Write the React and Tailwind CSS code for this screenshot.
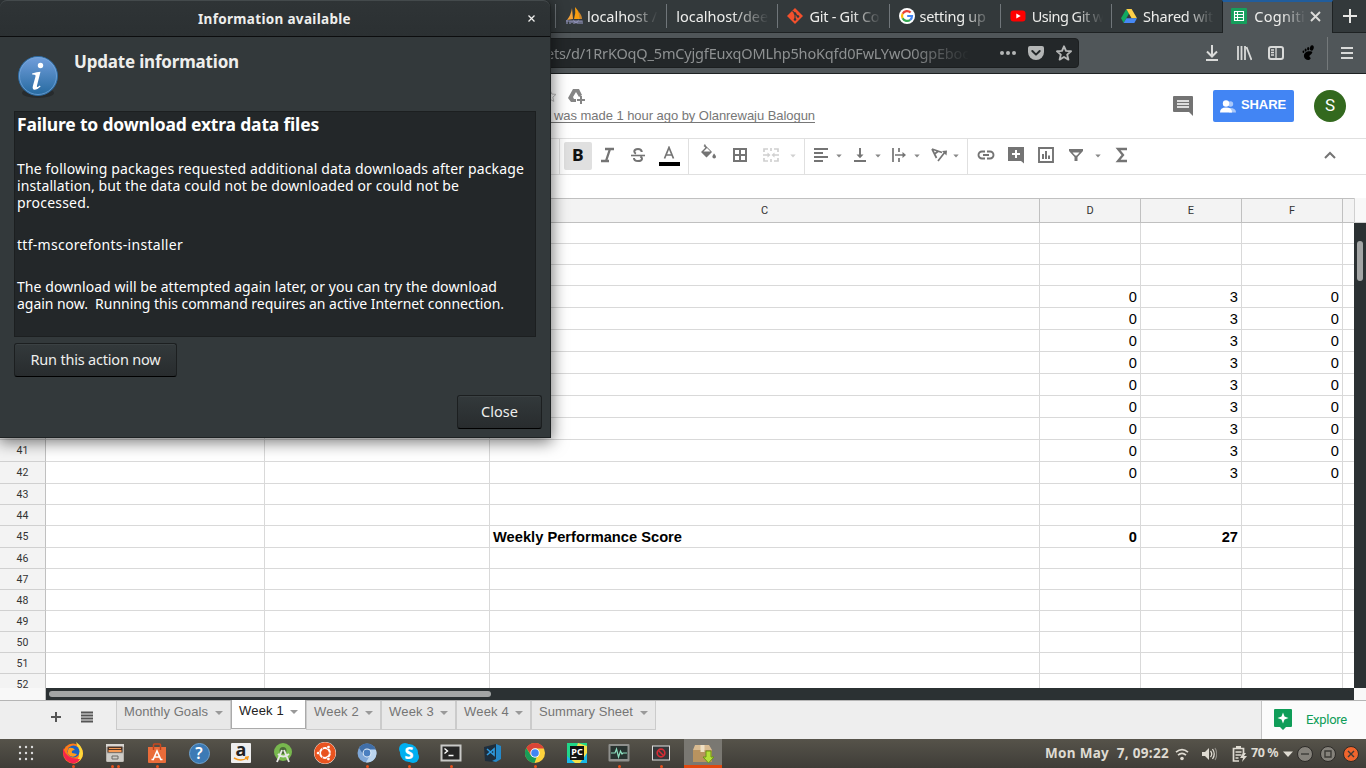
import React, { useLayoutEffect, useRef } from "react";
import { FaUbuntu } from "react-icons/fa";

const UBUNTU = "font-['Noto_Sans','Open_Sans',sans-serif]";
const ARIAL = "font-['Liberation_Sans',Arial,sans-serif]";
const ROBOTO = "font-[Roboto,sans-serif]";

/* A single line of text whose tracking is adjusted to span `w` pixels. */
function Fit({ w, className = "", children }) {
  const ref = useRef(null);
  useLayoutEffect(() => {
    const el = ref.current;
    el.style.letterSpacing = "0px";
    const natural = el.getBoundingClientRect().width;
    el.style.letterSpacing = (w - natural) / children.length + "px";
  }, [w, children]);
  return (
    <span ref={ref} className={"inline-block whitespace-pre " + className}>
      {children}
    </span>
  );
}

const Svg = ({ s = 18, vb = 18, className = "", children }) => (
  <svg width={s} height={s} viewBox={`0 0 ${vb} ${vb}`} className={"shrink-0 " + className} fill="currentColor">
    {children}
  </svg>
);

/* ---------- browser chrome ---------- */

const icons = {
  pma: (
    <Svg s={18}>
      <path d="M7 1 8 12 2 13Q6 8 7 1Z" fill="#f5a33b" />
      <path d="M10 0Q15 5 15 12L9 12Q11 6 10 0Z" fill="#f89c0e" />
      <path d="M13 4Q17 8 17 12L15 12Z" fill="#c9852f" />
      <path d="M1 14h16M2 17v-4M5 17v-3h2v2M9 17v-3l2 2 2-2v3M15 17v-3h2v3" stroke="#8d8fb5" fill="none" strokeWidth="1.2" />
    </Svg>
  ),
  git: (
    <Svg s={16} vb={16}>
      <path d="m8 0 8 8-8 8-8-8Z" fill="#f4502c" />
      <path d="m5.5 2.8 2.5 2.7v6M8 5.500l3 3" stroke="#33393b" fill="none" strokeWidth="1.1" />
      <circle cx="8" cy="5.5" r="1.3" fill="#33393b" />
      <circle cx="8" cy="11.5" r="1.3" fill="#33393b" />
      <circle cx="11" cy="8.5" r="1.3" fill="#33393b" />
    </Svg>
  ),
  google: (
    <Svg s={16} vb={16}>
      <circle cx="8" cy="8" r="8" fill="#fff" />
      <g fill="none" strokeWidth="2.2">
        <path d="M11.6 4.6A5 5 0 0 0 3.6 5.7" stroke="#ea4335" />
        <path d="M3.6 5.7A5 5 0 0 0 3.6 10.3" stroke="#fbbc05" />
        <path d="M3.6 10.3A5 5 0 0 0 11.2 11.8" stroke="#34a853" />
        <path d="M11.2 11.8A5 5 0 0 0 13 8H8.2" stroke="#4285f4" />
      </g>
    </Svg>
  ),
  youtube: (
    <Svg s={16} vb={16}>
      <rect x="0.5" y="2.5" width="15" height="11" rx="3" fill="#f00" />
      <path d="m6.3 5.5 4.4 2.5-4.4 2.5Z" fill="#fff" />
    </Svg>
  ),
  drive: (
    <Svg s={16} vb={16}>
      <path d="M5.3 1 0 10.3 2.7 15 8 5.6Z" fill="#11a861" />
      <path d="M5.3 1h5.3L16 10.3h-5.4Z" fill="#ffcf48" />
      <path d="M5.4 10.3H16L13.3 15H2.7Z" fill="#4688f4" />
    </Svg>
  ),
  sheets: (
    <Svg s={16} vb={16}>
      <rect width="16" height="16" rx="1" fill="#159f5c" />
      <path d="M3.5 3.5h9v9h-9ZM3.5 6.5h9M3.5 9.5h9M6.5 3.5v9" fill="none" stroke="#fff" strokeWidth="1.1" />
    </Svg>
  ),
};

const tabs = [
  { icon: "pma", text: "localhost /", w: 70, iw: "w-[31px]" },
  { icon: null, text: "localhost/dee", w: 92, iw: "w-[9px]" },
  { icon: "git", text: "Git - Git Co", w: 70, iw: "w-[31px]" },
  { icon: "google", text: "setting up", w: 66, iw: "w-[30px]" },
  { icon: "youtube", text: "Using Git w", w: 72, iw: "w-[31px]" },
  { icon: "drive", text: "Shared wit", w: 70, iw: "w-[31px]" },
];

function TabBar() {
  return (
    <div className="flex h-[33px] shrink-0 border-b border-[#1e2223] bg-[#33393b] pl-[555px]">
      {tabs.map((t, i) => (
        <div key={i} className="flex h-8 w-[111.2px] shrink-0 items-center">
          <div className="h-6 w-px shrink-0 bg-[#70767a]" />
          <div className={"flex shrink-0 items-center pl-[9px] " + t.iw}>{t.icon && icons[t.icon]}</div>
          <div className="w-[70px] flex-1 overflow-hidden pr-2">
            <div className="overflow-hidden [mask-image:linear-gradient(to_right,black_60%,transparent_100%)]">
              <Fit w={t.w} className="text-[14.5px] leading-6 text-[#eeeeec]">{t.text}</Fit>
            </div>
          </div>
        </div>
      ))}
      <div className="flex h-[33px] w-[111px] shrink-0 items-center border-x border-t-2 border-x-[#1e2223] border-t-[#215d9c] bg-[#505659] pb-[3px] pl-2">
        {icons.sheets}
        <div className="ml-[7px] w-[52px] overflow-hidden [mask-image:linear-gradient(to_right,black_55%,transparent_100%)]">
          <Fit w={51} className="text-[14.5px] leading-6 text-[#eeeeec]">Cogniti</Fit>
        </div>
        <Svg s={11} vb={11} className="mt-px ml-1 text-[#dcdcda]">
          <path d="m1 1 9 9M10 1l-9 9" stroke="currentColor" strokeWidth="1.9" />
        </Svg>
      </div>
      <div className="flex h-8 w-[33px] items-center justify-center text-[#e6e6e4]">
        <Svg s={14} vb={14}><path d="M7 0v14M0 7h14" stroke="currentColor" strokeWidth="2" /></Svg>
      </div>
    </div>
  );
}

function NavBar() {
  return (
    <div className="flex h-[41px] shrink-0 items-center border-b border-[#1e2223] bg-[#505659] text-[#d9dad9]">
      <div className="flex h-[30px] w-[1079px] shrink-0 items-center rounded-r border border-[#1c1f20] bg-[#232729] pl-[545px]">
        <div className="w-[424px] shrink-0 overflow-hidden [mask-image:linear-gradient(to_right,black_86%,transparent_100%)]">
          <Fit w={423} className="text-[14.5px] leading-6 text-[#8e9192]">ets/d/1RrKOqQ_5mCyjgfEuxqOMLhp5hoKqfd0FwLYwO0gpEboc</Fit>
        </div>
        <Svg s={16} vb={16} className="ml-[30px] text-[#b4b6b6]">
          <circle cx="2" cy="8" r="2" /><circle cx="8" cy="8" r="2" /><circle cx="14" cy="8" r="2" />
        </Svg>
        <Svg s={16} vb={16} className="ml-3 text-[#b4b6b6]">
          <path d="M2 1h12q2 0 2 2v4A8 8 0 0 1 0 7V3Q0 1 2 1Z" />
          <path d="m4.3 6 3.7 3.6L11.700 6" fill="none" stroke="#232729" strokeWidth="2" strokeLinecap="round" strokeLinejoin="round" />
        </Svg>
        <Svg s={16} vb={16} className="ml-3 text-[#b4b6b6]">
          <path d="m8 1.300 2 4.600 5 .4-3.800 3.300 1.200 5L8 12l-4.400 2.600 1.200-5L1 6.300l5-.4Z" fill="none" stroke="currentColor" strokeWidth="1.900" strokeLinejoin="round" />
        </Svg>
      </div>
      <div className="flex flex-1 items-center pl-[125px]">
        <Svg s={16} vb={16}><path d="M8 0v11M3 6.500l5 5 5-5M2 15h12" fill="none" stroke="currentColor" strokeWidth="2" /></Svg>
        <Svg s={16} vb={16} className="ml-4"><path d="M2 1v14M5.500 1v14M9 1v14M10.500 2l5 13" fill="none" stroke="currentColor" strokeWidth="1.800" /></Svg>
        <Svg s={16} vb={16} className="ml-4">
          <rect x="1" y="2" width="14" height="12" rx="2" fill="none" stroke="currentColor" strokeWidth="2" />
          <path d="M8 2v12M3 5h3M3 7.500h3M3 10h3" stroke="currentColor" strokeWidth="1.300" />
        </Svg>
        <Svg s={16} vb={16} className="ml-4 text-black">
          <ellipse cx="11.800" cy="3" rx="1.900" ry="2.700" transform="rotate(15 12 3)" />
          <ellipse cx="8.200" cy="3.800" rx="1.100" ry="1.700" /><ellipse cx="5.600" cy="5" rx="1" ry="1.500" /><ellipse cx="3.400" cy="6.700" rx=".9" ry="1.300" />
          <path d="M11.500 6.500C7 5.500 3.500 8 4 11.500c.4 3.300 5 4.800 6.500 2.300.8-1.500-2-2-.8-3.300 1.300-1 4-3.300 1.800-4Z" />
        </Svg>
        <div className="ml-[11px] h-[33px] w-px bg-[#74797b]" />
        <Svg s={12} vb={12} className="ml-[13px]"><path d="M0 1h12M0 6h12M0 11h12" stroke="currentColor" strokeWidth="2" /></Svg>
      </div>
    </div>
  );
}

/* ---------- spreadsheet ---------- */

function DocHeader() {
  return (
    <div className={"flex h-16 shrink-0 pl-[543px] " + ARIAL}>
      <div className="w-[630px]">
        <div className="flex h-[34px] items-center pt-[9px]">
          <Svg s={14} vb={14} className="text-[#bbb]"><path d="m7 1 1.800 4 4.200.4-3.200 2.800 1 4.200L7 10.200l-3.800 2.200 1-4.200L1 5.400 5.200 5Z" fill="none" stroke="currentColor" /></Svg>
          <Svg s={18} className="ml-[10px] text-[#858585]">
            <path d="M6 2h6l3 6-3 2-3-5-3 5 1 2H9v3H4L1 11Z" />
            <path d="M13 9h2v3h3v2h-3v3h-2v-3h-3v-2h3Z" />
          </Svg>
        </div>
        <div className="flex h-[15px] w-[272px] items-center justify-end border-b border-[#777] pt-[2px]">
          <Fit w={261} className="text-[13px] leading-4 text-[#777]">was made 1 hour ago by Olanrewaju Balogun</Fit>
        </div>
      </div>
      <div className="flex items-center">
        <Svg s={20} vb={20} className="text-[#737373]">
          <path d="M1 0h18q1 0 1 1v19l-4-4H1q-1 0-1-1V1q0-1 1-1Z" />
          <path d="M4 5h12M4 8h12M4 11h12" stroke="#fff" strokeWidth="1.600" />
        </Svg>
        <div className="ml-5 flex h-8 w-[81px] items-center rounded-[2px] bg-[#4285f4] pl-[7px] text-white">
          <Svg s={16} vb={16} className="mt-[2px]">
            <circle cx="10.500" cy="5" r="2.700" opacity=".55" /><path d="M9 9q7-.5 7 4.500H9Z" opacity=".55" />
            <circle cx="6" cy="4.500" r="3.200" /><path d="M0 13.500q0-5 6-5t6 5Z" />
          </Svg>
          <Fit w={45} className="-mt-[2px] ml-[5px] text-[13px] font-bold">SHARE</Fit>
        </div>
        <div className={"ml-5 flex h-8 w-8 items-center justify-center rounded-full bg-[#33691e] text-[17px] text-white " + ROBOTO}>S</div>
      </div>
    </div>
  );
}

const Caret = ({ faint }) => (
  <Svg s={6} vb={6} className={"mt-[2px] " + (faint ? "text-[#d0d0d0]" : "text-[#888]")}><path d="M.3 1.500h5.400L3 4.500Z" /></Svg>
);
const Line = ({ d, sw = 2 }) => <path d={d} fill="none" stroke="currentColor" strokeWidth={sw} />;

const tools = [
  ["w-[32px]", <Svg><Line d="M6 3h9M2 15h8M11 3 7 15" sw={2.300} /></Svg>],
  ["w-[28px]", <Svg><Line d="M2 9.500h14" sw={1.600} /><Line d="M12.800 6Q12.500 3 9 3 5.300 3 5.300 5.500 5.300 7 7 7.600M11.300 10.500q1.800.7 1.700 2.300Q12.800 15 9 15q-4 0-4-3" sw={2} /></Svg>],
  ["w-[34px]", <div className="flex flex-col items-center"><Svg s={14} vb={14} className="mt-[2px]"><Line d="M2.500 12.500 7 1.500l4.500 11M4.200 9h5.600" sw={1.700} /></Svg><div className="mt-[2px] h-1 w-[21px] bg-black" /></div>],
  ["w-[2px]", null],
  ["sep"],
  ["w-[38px]", <Svg className="-mt-1"><path d="M6 0 5 1l2 2-5 5 5.500 5.500L13 8 7 2Z" /><Line d="M5 1.500 12 8" sw={1.200} /><path d="M8 4 4.500 7.500h7Z" fill="#fff" /><path d="M15 9.500s2 2.200 2 3.300a1.800 1.800 0 0 1-3.600 0c0-1.100 1.600-3.300 1.600-3.300Z" /></Svg>],
  ["w-[26px]", <Svg><Line d="M3 3h12v12H3ZM9 3v12M3 9h12" /></Svg>],
  ["w-[36px]", <Svg className="text-[#d0d0d0]"><Line d="M6 3H2v3M6 15H2v-3M12 3h4v3M12 15h4v-3M9 2v3M9 13v3M1 9h6M11 9h6" sw={1.700} /><path d="m5.500 6.500 3 2.500-3 2.500ZM12.500 6.500l-3 2.500 3 2.500Z" /></Svg>],
  ["w-[7px]", <Caret faint />],
  ["w-[8px]", null],
  ["sep"],
  ["w-[32px]", <Svg><Line d="M2 3h14M2 7h9M2 11h14M2 15h9" sw={1.900} /></Svg>],
  ["w-[3px]", <Caret />],
  ["w-[4px]", null],
  ["w-[32px]", <Svg><Line d="M3 15h12M9 2v8" sw={1.900} /><path d="M5.500 8.500h7L9 12.200Z" /></Svg>],
  ["w-[3px]", <Caret />],
  ["w-[3px]", null],
  ["w-[33px]", <Svg><Line d="M3 2v14M9 2v4M9 12v4M5 9h9" sw={1.700} /><path d="M12.500 6 16 9l-3.500 3Z" /></Svg>],
  ["w-[3px]", <Caret />],
  ["w-[4px]", null],
  ["w-[33px]", <Svg><Line d="M2 3 12 6.500M2 3l4.500 9M8.500 5l-4 3M8 15l7-9" sw={1.700} /><path d="m12 5 5-.5-.5 5Z" /></Svg>],
  ["w-[1px]", <Caret />],
  ["w-[11px]", null],
  ["sep"],
  ["w-[36px]", <Svg><Line d="M8 5.500H5a3.500 3.500 0 0 0 0 7h3M10 5.500h3a3.500 3.500 0 0 1 0 7h-3M6 9h6" sw={1.900} /></Svg>],
  ["w-[24px]", <Svg><path d="M1 1h16v16.500L14 15H1Z" /><path d="M8 4h2v3h3v2h-3v3H8V9H5V7h3Z" fill="#fff" /></Svg>],
  ["w-[36px]", <Svg><Line d="M2 2h14v14H2Z" sw={1.900} /><Line d="M6 8v5M9 5v8M12 9.500V13" /></Svg>],
  ["w-[24px]", <Svg><path d="M2 3h14v2l-5.500 6v4h-3v-4L2 5Z" /><path d="M5.500 6.500h7L9.800 9.500H8.200Z" fill="#fff" /></Svg>],
  ["w-[19px]", <Caret />],
  ["w-[30px]", <Svg><Line d="M14 3H5l5 6-5 6h9" sw={2.300} /></Svg>],
];

function FormatBar() {
  return (
    <div className="flex h-[37px] shrink-0 items-center border-y border-[#e0e0e0] pl-[559px] text-[#747474]">
      <div className="h-full w-px bg-[#e0e0e0]" />
      <div className={"mb-px ml-1 flex h-7 w-7 items-center justify-center rounded-[2px] bg-[#e0e0e0] text-[17px] font-black text-[#111] " + ROBOTO}>B</div>
      {tools.map(([w, el], i) =>
        w === "sep" ? (
          <div key={i} className="h-full w-px shrink-0 bg-[#e0e0e0]" />
        ) : (
          <div key={i} className={"mb-[3px] flex shrink-0 items-center justify-center " + w}>{el}</div>
        )
      )}
      <div className="mb-[3px] flex flex-1 justify-end pr-[30px]">
        <Svg s={12} vb={12}><Line d="m1 9 5-5 5 5" sw={2} /></Svg>
      </div>
    </div>
  );
}

const cols = "grid grid-cols-[46px_219px_225px_550px_101px_101px_101px_11px]";

const blank = ["", "", "", "", "", "", ""];
const rows = [
  ...[31, 32, 33].map((id) => ({ id, v: blank })),
  ...[34, 35, 36, 37, 38, 39, 40].map((id) => ({ id, tall: true, v: ["", "", "", "0", "3", "0", ""] })),
  ...[41, 42].map((id) => ({ id, n: id, tall: true, v: ["", "", "", "0", "3", "0", ""] })),
  ...[43, 44].map((id) => ({ id, n: id, v: blank })),
  { id: 45, n: 45, tall: true, bold: true, v: ["", "", "Weekly Performance Score", "0", "27", "", ""] },
  ...[46, 47, 48, 49, 50, 51, 52].map((id) => ({ id, n: id, v: blank })),
];

function Sheet() {
  return (
    <div className="flex h-[502px] shrink-0">
      <div className="w-[1354px] shrink-0">
        <div className={cols + " h-[25px] border-y border-[#c0c0c0] bg-[#f3f3f3] text-[11px] text-[#333] " + ROBOTO}>
          {["", "", "", "C", "D", "E", "F", ""].map((c, i) => (
            <div key={i} className={"flex items-center justify-center pt-[2px] " + (i === 7 ? "" : "border-r border-[#c0c0c0]")}>{c}</div>
          ))}
        </div>
        <div className="h-[465px] overflow-hidden">
          {rows.map((r) => (
            <div key={r.id} className={cols + " " + (r.tall ? "h-[22px]" : "h-[21px]") + (r.bold ? " font-bold" : "")}>
              <div className={"flex items-center justify-center border-r border-b border-r-[#c0c0c0] border-b-[#d0d0d0] bg-[#f3f3f3] text-[10.5px] font-normal text-[#333] " + (r.tall ? "" : "pt-[2px] ") + ROBOTO}>{r.n}</div>
              {r.v.map((v, i) => (
                <div key={i} className={"flex items-end border-b border-[#d9d9d9] text-[14.67px] leading-[19px] text-black " + ARIAL + (i > 2 ? " justify-end pr-[3px]" : " pl-[3px]") + (i === 6 ? "" : " border-r")}>
                  {i === 2 && v ? <Fit w={189}>{v}</Fit> : v}
                </div>
              ))}
            </div>
          ))}
        </div>
        <div className="flex h-3">
          <div className="w-[46px] border-r border-[#c0c0c0] bg-[#f8f8f8]" />
          <div className="flex flex-1 items-center bg-[#2b3133] pl-[3px]">
            <div className="h-[6px] w-[442px] rounded-full bg-[#a3a5a5]" />
          </div>
        </div>
      </div>
      <div className="flex w-3 flex-col">
        <div className="h-[25px] border-b border-l border-[#d0d0d0] bg-[#f8f8f8]" />
        <div className="flex h-[465px] justify-center bg-[#2b3133] pt-[18px]">
          <div className="h-10 w-[6px] rounded-full bg-[#a3a5a5]" />
        </div>
        <div className="h-3 bg-[#f8f8f8]" />
      </div>
    </div>
  );
}

const sheetTabs = [
  ["Monthly Goals", 84, "w-[115px]"],
  ["Week 1", 45, "w-[75px]"],
  ["Week 2", 45, "w-[75px]"],
  ["Week 3", 45, "w-[75px]"],
  ["Week 4", 45, "w-[75px]"],
  ["Summary Sheet", 94, "w-[125px]"],
];

function SheetTabs() {
  return (
    <div className={"flex h-[39px] shrink-0 border-t border-[#b5b5b5] bg-[#eee] " + ARIAL}>
      <div className="flex w-[116px] shrink-0 items-center pl-[51px] text-[#555]">
        <Svg s={10} vb={10} className="mt-[-6px]"><Line d="M5 0v10M0 5h10" /></Svg>
        <Svg s={12} vb={12} className="mt-[-6px] ml-5"><Line d="M0 1.500h12M0 4.500h12M0 7.500h12M0 10.500h12" sw={1.800} /></Svg>
      </div>
      {sheetTabs.map(([t, w, cw], i) => (
        <div
          key={t}
          className={
            "flex shrink-0 items-start justify-between border-x border-b pr-[7px] pl-[7px] " + cw +
            (i === 1 ? " -mt-px h-[29px] border-[#aaa] bg-white text-[#222]" : " h-[29px] border-[#cbcbcb] bg-[#e8e8e8] text-[#757575]")
          }
        >
          <Fit w={w} className="pt-[2px] text-[13px] leading-[18px]">{t}</Fit>
          <Svg s={8} vb={8} className="mt-2 text-[#999]"><path d="M0 2h8L4 6Z" /></Svg>
        </div>
      ))}
      <div className="ml-auto flex w-[105px] items-center border-l border-[#c4c4c4] bg-[#fbfbfb] pl-3 text-[#0f9d58]">
        <Svg s={22} vb={22} className="-mr-1">
          <path d="M1 0h16q1 0 1 1v16q0 1-1 1h-5l-3 3-3-3H1q-1 0-1-1V1q0-1 1-1Z" />
          <path d="m9 3.500 1.500 4 4 1.500-4 1.500L9 14.500l-1.500-4-4-1.500 4-1.500Z" fill="#fff" />
        </Svg>
        <Fit w={41} className={"ml-[14px] text-[13px] " + ROBOTO}>Explore</Fit>
      </div>
    </div>
  );
}

/* ---------- dock ---------- */

const dock = [
  { el: <Svg s={16} vb={16} className="text-[#ddd]">{[2, 8, 14].map((y) => [2, 8, 14].map((x) => <circle key={x + "-" + y} cx={x} cy={y} r="1.200" />))}</Svg> },
  {
    dots: 1,
    el: (
      <Svg s={22} vb={22}>
        <circle cx="11" cy="11.500" r="10" fill="#ff7a18" />
        <path d="M14 0q7 5 7 11.500A10 10 0 0 1 11 21.500q7-4 6-11-1-5-3-10.500Z" fill="#ffd83a" />
        <path d="M1 6Q0 19 11 21.500 16 21 18 17 5 18 1 6Z" fill="#f6244d" />
        <circle cx="11.500" cy="9.500" r="6" fill="#1b5fc0" />
        <path d="M7 6q4-1 6 2-4 0-3 3l5 1q-2 4-7 2-4-3-1-8Z" fill="#ff9a1c" />
      </Svg>
    ),
  },
  {
    dots: 2,
    el: (
      <Svg s={20} vb={20}>
        <rect x="1" y="1" width="18" height="18" rx="1.500" fill="#b3b0ab" />
        <rect x="1" y="1" width="18" height="3" fill="#d8d6d2" />
        <rect x="2.500" y="3.500" width="15" height="6" fill="#4d3325" />
        <path d="M4 5h12v1H4ZM3.500 7h13v2h-13Z" fill="#f49a56" />
        <rect x="2" y="10.500" width="16" height="8" fill="#cfcdc8" />
        <path d="M7 13h6v3H7Z" fill="none" stroke="#6b6965" />
      </Svg>
    ),
  },
  {
    dots: 1,
    el: (
      <Svg s={20} vb={20}>
        <path d="M6.500 6V2q0-1 1-1h5q1 0 1 1v4" fill="none" stroke="#c9481f" strokeWidth="1.600" />
        <path d="M1 4h18v15q0 1-1 1H2q-1 0-1-1Z" fill="#ea6c3a" />
        <path d="M6.500 7V4M13.500 7V4" stroke="#b8401b" strokeWidth="1.400" />
        <path d="m6 17 4-9 4 9M8 14h4M4.500 16.500h2.500M13 16.500h2.500" fill="none" stroke="#fff" strokeWidth="1.600" />
      </Svg>
    ),
  },
  {
    el: (
      <div className="flex h-[21px] w-[21px] items-center justify-center rounded-full border border-[#6fa3d0] bg-[#3c7ab5] font-['Noto_Sans',sans-serif] text-[16px] leading-none font-semibold text-white">?</div>
    ),
  },
  { el: <div className="flex h-5 w-5 items-center justify-center rounded-[1px] bg-[#eeeeee]"><Svg s={20} vb={20}><text x="10" y="13" textAnchor="middle" fontSize="18" fontWeight="700" fontFamily="Noto Sans, sans-serif" fill="#222">a</text><path d="M3 15q7 4 13 0M14 14.500l3-.5-.8 3" fill="none" stroke="#f79a1c" strokeWidth="1.500" /></Svg></div> },
  {
    el: (
      <Svg s={20} vb={20}>
        <circle cx="10" cy="9" r="9" fill="#78b84e" />
        <circle cx="10" cy="7.500" r="3.500" fill="#4c6b3a" />
        <path d="m9 7-5 12M11 7l5 12M5 11q5 5 11 0" stroke="#e8e8e8" fill="none" strokeWidth="1.900" />
      </Svg>
    ),
  },
  { el: <FaUbuntu size={22} className="rounded-full bg-white text-[#e95420]" /> },
  {
    dots: 1,
    el: (
      <Svg s={20} vb={20}>
        <circle cx="10" cy="10" r="9.500" fill="#7ea7d8" />
        <path d="M10 .5A9.500 9.500 0 0 1 18.500 6H10L6 11 2 5A9.500 9.500 0 0 1 10 .5Z" fill="#416fa8" />
        <path d="M13 12 9 19.500A9.500 9.500 0 0 0 19 7h-6Z" fill="#bcd5ee" />
        <circle cx="10" cy="10" r="4.400" fill="#e9f2fb" /><circle cx="10" cy="10" r="3.400" fill="#4a7fc0" />
      </Svg>
    ),
  },
  {
    dots: 1,
    el: (
      <Svg s={20} vb={20}>
        <circle cx="6" cy="6" r="6" fill="#00aff0" /><circle cx="14" cy="14" r="6" fill="#00aff0" /><circle cx="10" cy="10" r="9" fill="#00aff0" />
        <text x="10" y="15.500" textAnchor="middle" fontSize="16" fontWeight="800" fontFamily="Noto Sans, sans-serif" fill="#fff">S</text>
      </Svg>
    ),
  },
  {
    dots: 1,
    el: (
      <Svg s={22} vb={22}>
        <rect x=".5" y="2.500" width="21" height="17" fill="#c9c9c7" /><rect x="2.500" y="4.500" width="17" height="13" fill="#262626" />
        <path d="m4.500 6.500 3 2.500-3 2.500M8.500 13.500h5" stroke="#fff" fill="none" strokeWidth="1.400" />
      </Svg>
    ),
  },
  {
    el: (
      <Svg s={20} vb={20}>
        <path d="M1 4 13 1v15l-3 3-8-1Z" fill="#1e2e3d" /><path d="m13 1 5 2v13l-5 3-4-1 4-2Z" fill="#2489ca" />
        <path d="m4 6 7 6V6l-7 6" fill="none" stroke="#2f9be0" strokeWidth="1.600" />
      </Svg>
    ),
  },
  {
    dots: 1,
    el: (
      <Svg s={20} vb={20}>
        <circle cx="10" cy="10" r="10" fill="#fdd23c" />
        <path d="M10 0A10 10 0 0 1 19 5.500H10L6 12 1.300 5A10 10 0 0 1 10 0Z" fill="#db4437" />
        <path d="M1.300 5 6 12.500l5.500 2L9.500 20A10 10 0 0 1 1.300 5Z" fill="#189c58" />
        <circle cx="10" cy="10" r="4.700" fill="#fff" /><circle cx="10" cy="10" r="3.800" fill="#4285f4" />
      </Svg>
    ),
  },
  {
    el: (
      <Svg s={20} vb={20}>
        <path d="M0 0h20v20H0Z" fill="#21d789" /><path d="m11 0 9 3v9l-6 8H4Z" fill="#f4e04a" /><path d="m0 13 8 7H0ZM20 10v10h-7Z" fill="#18b9e8" />
        <path d="M3 3h14v14H3Z" fill="#111" />
        <text x="10" y="11.500" textAnchor="middle" fontSize="9" fontWeight="700" fontFamily="Noto Sans, sans-serif" fill="#fff">PC</text>
        <path d="M4.500 14.500h5" stroke="#fff" strokeWidth="1.200" />
      </Svg>
    ),
  },
  {
    dots: 1,
    el: (
      <Svg s={22} vb={22}>
        <rect x=".5" y="2" width="21" height="17.500" rx="1" fill="#8f908d" /><rect x="2.500" y="4" width="17" height="13" fill="#283330" />
        <path d="M3 11h4l1.500-4 2 8 2-6 1.500 3 1-1h4" fill="none" stroke="#8ee0c0" strokeWidth="1.200" />
      </Svg>
    ),
  },
  {
    dots: 1,
    el: (
      <Svg s={18}>
        <rect x=".5" y="2" width="17" height="14" fill="#35383b" stroke="#ddd" />
        <circle cx="9" cy="9" r="3.800" fill="none" stroke="#d62c35" strokeWidth="1.700" /><path d="m6.500 6.500 5 5" stroke="#d62c35" strokeWidth="1.500" />
      </Svg>
    ),
  },
  {
    active: true,
    el: (
      <Svg s={22} vb={22}>
        <path d="M3 3h14l3 5H1Z" fill="#d9bb91" /><path d="M1 8h19v12H1Z" fill="#b8935f" /><path d="M8.500 3h4v7h-4Z" fill="#efe0c5" />
        <path d="M14 9h5v6h3l-5.500 6L11 15h3Z" fill="#b4e038" stroke="#6b9417" />
      </Svg>
    ),
  },
];

function Dock() {
  return (
    <div className={"flex h-[29px] shrink-0 bg-linear-to-b from-[#56534a] to-[#3f3d38] pl-[5px] text-[#dfdbd2] " + UBUNTU}>
      {dock.map((d, i) => (
        <div key={i} className={"flex h-[29px] w-[42px] shrink-0 justify-center " + (i === 0 ? "mr-[5px]" : "")}>
          <div className={"flex h-full w-[38px] flex-col items-center " + (d.active ? "border-b-[3px] border-[#e0470f] bg-[#7a7872]" : "")}>
            <div className="flex h-[26px] shrink-0 items-center justify-center pt-[2px]">{d.el}</div>
            <div className="flex h-[3px] gap-[3px]">
              {Array.from({ length: d.dots || 0 }, (_, k) => <div key={k} className="h-[3px] w-[3px] rounded-full bg-[#e8501c]" />)}
            </div>
          </div>
        </div>
      ))}
      <div className="ml-auto flex items-center pr-[7px]">
        <Fit w={124} className="text-[13.5px] font-bold">Mon May  7, 09:22</Fit>
        <Svg s={14} vb={14} className="ml-[6px]">
          <circle cx="7" cy="11.500" r="1.800" />
          <Line d="M1 5.200q6-5 12 0" sw={1.700} /><Line d="M3 8.200q4-3.500 8 0" sw={1.700} />
        </Svg>
        <Svg s={16} vb={16} className="ml-3">
          <path d="M1 6h3l4-4v12l-4-4H1Z" /><Line d="M9.500 5q2.500 3 0 6M11.500 3q3.500 5 0 10" sw={1.300} /><path d="M14 2q3.500 6 0 12" stroke="#8d8a83" fill="none" strokeWidth="1.200" />
        </Svg>
        <Svg s={16} vb={16} className="ml-[15px]">
          <Line d="M7 15H1.500V2.500h10V8" sw={1.700} /><path d="M4 0h5v3H4Z" /><Line d="M3.500 6h6M3.500 9h6M3.500 12h3" sw={1.400} /><path d="m11 7-3 5h3l-1 4 5-6h-3l2-3Z" />
        </Svg>
        <Fit w={27} className="ml-[3px] text-[12.500px] font-bold">70 %</Fit>
        <Svg s={10} vb={10} className="ml-[5px]"><path d="M0 2.500h10L5 8Z" /></Svg>
        <div className="ml-[4px] flex gap-[7px]">
          {["M4 8h8", "M5 5h6v6H5Z", "m5 5 6 6M11 5l-6 6"].map((d, i) => (
            <Svg key={i} s={16} vb={16} className="text-[#3c3b37]">
              <circle cx="8" cy="8" r="7.500" fill={i === 2 ? "#f0652d" : "#85827b"} stroke="#2d2b28" />
              <Line d={d} sw={1.400} />
            </Svg>
          ))}
        </div>
      </div>
    </div>
  );
}

/* ---------- update dialog ---------- */

const Para = ({ lines, className = "" }) => (
  <div className={"flex flex-col items-start text-[14px] leading-[17px] " + className}>
    {lines.map(([t, w]) => <Fit key={t} w={w}>{t}</Fit>)}
  </div>
);

function Button({ w, className, children }) {
  return (
    <button className={"flex h-[34px] items-center justify-center rounded-[3px] border border-[#1c1f20] border-b-black bg-linear-to-b from-[#33393b] to-[#282c2e] text-[14.500px] text-[#eeeeec] shadow-[inset_0_1px_#3b4143] " + className}>
      <Fit w={w}>{children}</Fit>
    </button>
  );
}

function Dialog() {
  return (
    <div className={"absolute top-0 left-0 h-[438px] w-[551px] rounded-t-[7px] border-r border-b border-[#1f2324] bg-[#33393b] shadow-[0_3px_16px_1px_rgba(0,0,0,0.55)] " + UBUNTU}>
      <div className="flex h-[37px] items-center rounded-t-[7px] border-t border-b border-t-[#444a4c] border-b-[#0c0d0e] bg-linear-to-b from-[#2f3436] to-[#2b3032] pl-[198px] text-[#eeeeec]">
        <Fit w={153} className="pt-px text-[13.500px] font-bold">Information available</Fit>
        <Svg s={7} vb={7} className="ml-[177px]"><Line d="m.5.5 6 6M6.500.5l-6 6" sw={1.300} /></Svg>
      </div>
      <div className="px-[14px]">
        <div className="flex h-[74px] pt-[14px] pl-1">
          <svg width="40" height="46" viewBox="0 0 40 46" className="mt-[5px]">
            <defs>
              <linearGradient id="info" x1="0" y1="0" x2="0" y2="1"><stop offset="0" stopColor="#729fdc" /><stop offset="1" stopColor="#25699f" /></linearGradient>
            </defs>
            <ellipse cx="20" cy="37" rx="16" ry="5" fill="#272b2d" />
            <circle cx="20" cy="20" r="19.500" fill="url(#info)" stroke="#2d6ba2" />
            <circle cx="20" cy="20" r="18.500" fill="none" stroke="#79a9db" opacity=".7" />
            <circle cx="22.500" cy="9.500" r="2.700" fill="#fff" />
            <path d="M14 17.500q5-1.500 8.500-1.800L19 29.500q-.5 2 .8 1.500l2-1.500.8 1q-3.500 3.500-6 3.300-2.800-.3-1.600-4.300l2.500-9q.5-1.700-1-1.800l-2.300-.2Z" fill="#fff" />
          </svg>
          <Fit w={165} className="-mt-[2px] ml-4 h-6 text-[17px] leading-[26px] font-bold text-[#eeeeec]">Update information</Fit>
        </div>
        <div className="h-[226px] w-[522px] border border-[#1c1f20] bg-[#232729] pl-[2px] text-white">
          <Fit w={302} className="text-[17.500px] leading-6 font-bold">Failure to download extra data files</Fit>
          <Para className="mt-[23px]" lines={[
            ["The following packages requested additional data downloads after package", 507],
            ["installation, but the data could not be downloaded or could not be", 442],
            ["processed.", 73],
          ]} />
          <Para className="mt-[25px]" lines={[["ttf-mscorefonts-installer", 166]]} />
          <Para className="mt-[25px]" lines={[
            ["The download will be attempted again later, or you can try the download", 480],
            ["again now.  Running this command requires an active Internet connection.", 487],
          ]} />
        </div>
        <Button w={130} className="mt-[6px] w-[163px]">Run this action now</Button>
      </div>
      <div className="mt-[18px] flex justify-end pr-2">
        <Button w={37} className="w-[85px]">Close</Button>
      </div>
    </div>
  );
}

export default function App() {
  return (
    <div className={"relative flex h-[768px] w-[1366px] flex-col overflow-hidden bg-white " + UBUNTU}>
      <TabBar />
      <NavBar />
      <DocHeader />
      <FormatBar />
      <div className="h-[23px] shrink-0" />
      <Sheet />
      <SheetTabs />
      <Dock />
      <Dialog />
    </div>
  );
}
